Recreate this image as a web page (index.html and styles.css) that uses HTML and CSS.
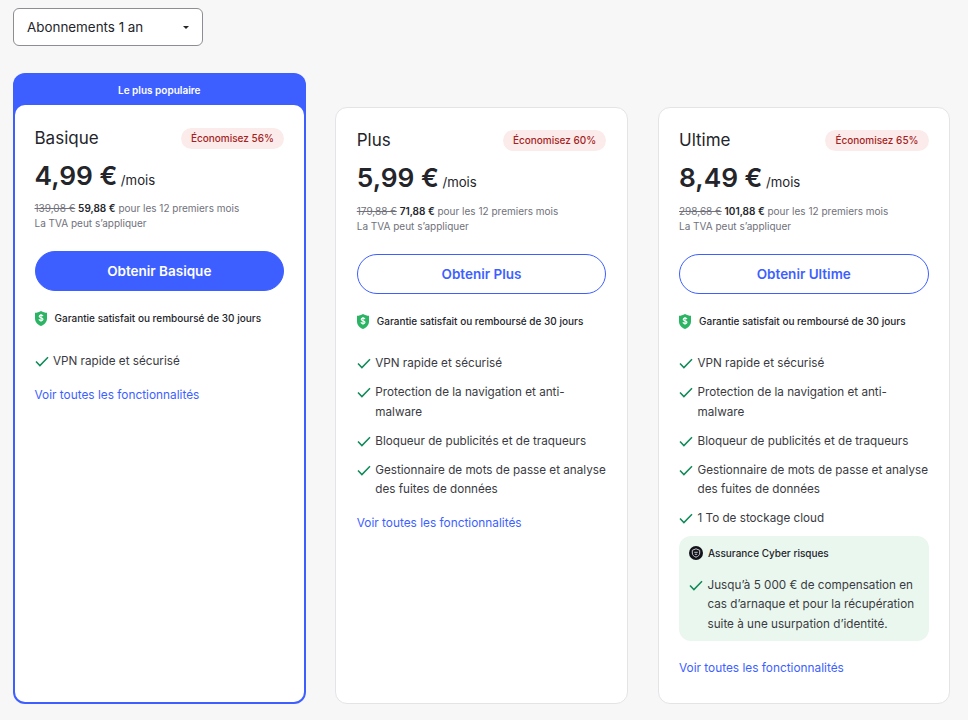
FILE: index.html
```html
<!DOCTYPE html>
<html lang="fr">
<head>
<meta charset="utf-8">
<title>Abonnements</title>
<link rel="stylesheet" href="styles.css">
</head>
<body>
<svg class="defs" width="0" height="0" aria-hidden="true">
  <symbol id="check" viewBox="0 0 14 11"><path d="M1 5.600 4.900 9.600 13 1.200" fill="none" stroke="#0f8a58" stroke-width="1.500"/></symbol>
  <symbol id="shield" viewBox="0 0 12 15"><path d="M6 0C8 1.200 10 1.700 12 1.800V7.500C12 11 9.500 13.500 6 15 2.500 13.500 0 11 0 7.500V1.800C2 1.700 4 1.200 6 0Z" fill="#2bb463"/><path d="M8 5.100C7.700 4.400 7 4.100 6 4.100 4.900 4.100 4.200 4.600 4.200 5.400 4.200 7.200 8 6.200 8 8.200 8 9 7.200 9.500 6 9.500 5 9.500 4.200 9.100 3.900 8.300M6 3V10.700" fill="none" stroke="#fff" stroke-width="1.100"/></symbol>
</svg>
<main class="page">
  <div class="select"><span>Abonnements 1 an</span><i class="caret"></i></div>
  <div class="plans">
    <section class="featured">
      <div class="ribbon">Le plus populaire</div>
      <article class="card card-inner">
        <header class="head"><h2>Basique</h2><span class="badge">Économisez 56%</span></header>
        <p class="price"><strong>4,99 €</strong> <span>/mois</span></p>
        <p class="meta"><s>139,08 €</s> <b>59,88 €</b> pour les 12 premiers mois<br>La TVA peut s’appliquer</p>
        <a class="cta cta-solid">Obtenir Basique</a>
        <p class="guarantee"><svg class="shield"><use href="#shield"/></svg>Garantie satisfait ou remboursé de 30 jours</p>
        <ul class="features">
          <li><svg class="check"><use href="#check"/></svg>VPN rapide et sécurisé</li>
        </ul>
        <a class="more">Voir toutes les fonctionnalités</a>
      </article>
    </section>
    <article class="card">
      <header class="head"><h2>Plus</h2><span class="badge">Économisez 60%</span></header>
      <p class="price"><strong>5,99 €</strong> <span>/mois</span></p>
      <p class="meta"><s>179,88 €</s> <b>71,88 €</b> pour les 12 premiers mois<br>La TVA peut s’appliquer</p>
      <a class="cta">Obtenir Plus</a>
      <p class="guarantee"><svg class="shield"><use href="#shield"/></svg>Garantie satisfait ou remboursé de 30 jours</p>
      <ul class="features">
        <li><svg class="check"><use href="#check"/></svg>VPN rapide et sécurisé</li>
        <li><svg class="check"><use href="#check"/></svg>Protection de la navigation et anti-malware</li>
        <li><svg class="check"><use href="#check"/></svg>Bloqueur de publicités et de traqueurs</li>
        <li><svg class="check"><use href="#check"/></svg>Gestionnaire de mots de passe et analyse des fuites de données</li>
      </ul>
      <a class="more">Voir toutes les fonctionnalités</a>
    </article>
    <article class="card">
      <header class="head"><h2>Ultime</h2><span class="badge">Économisez 65%</span></header>
      <p class="price"><strong>8,49 €</strong> <span>/mois</span></p>
      <p class="meta"><s>298,68 €</s> <b>101,88 €</b> pour les 12 premiers mois<br>La TVA peut s’appliquer</p>
      <a class="cta">Obtenir Ultime</a>
      <p class="guarantee"><svg class="shield"><use href="#shield"/></svg>Garantie satisfait ou remboursé de 30 jours</p>
      <ul class="features">
        <li><svg class="check"><use href="#check"/></svg>VPN rapide et sécurisé</li>
        <li><svg class="check"><use href="#check"/></svg>Protection de la navigation et anti-malware</li>
        <li><svg class="check"><use href="#check"/></svg>Bloqueur de publicités et de traqueurs</li>
        <li><svg class="check"><use href="#check"/></svg>Gestionnaire de mots de passe et analyse des fuites de données</li>
        <li><svg class="check"><use href="#check"/></svg>1 To de stockage cloud</li>
      </ul>
      <div class="insurance">
        <p class="insurance-title"><svg class="cyber" viewBox="0 0 14 14"><circle cx="7" cy="7" r="7" fill="#12131a"/><path d="M7 2.800 10.700 4.300V7C10.700 9.100 9.100 10.500 7 11.200 4.900 10.500 3.300 9.100 3.300 7V4.300Z" fill="none" stroke="#c9c9ce" stroke-width="1"/><path d="M5.300 6.300H8.700M5.800 8.300H8.200" stroke="#c9c9ce" stroke-width="1"/></svg>Assurance Cyber risques</p>
        <p class="insurance-item"><svg class="check"><use href="#check"/></svg>Jusqu’à 5 000 € de compensation en cas d’arnaque et pour la récupération suite à une usurpation d’identité.</p>
      </div>
      <a class="more">Voir toutes les fonctionnalités</a>
    </article>
  </div>
</main>
</body>
</html>
```
FILE: styles.css
```css
* { box-sizing: border-box; }
html, body { margin: 0; height: 720px; overflow: hidden; }
body { background: #f7f7f8; font-family: Inter, "Liberation Sans", sans-serif; color: #24252b; }
.defs { position: absolute; }
p, h2, ul { margin: 0; padding: 0; }
.page { padding: 8px 17px 0 13px; }
.select { width: 190px; height: 38px; display: flex; align-items: center; justify-content: space-between; padding: 0 13px 0 13px; background: #fff; border: 1px solid #8d8e93; border-radius: 6px; font-size: 13.400px; }
.caret { width: 0; height: 0; border: 3.500px solid transparent; border-top-color: #24252b; border-bottom-width: 0; }
.plans { display: grid; grid-template-columns: 292.500px 292.500px 292.500px; column-gap: 29.750px; margin-top: 27px; align-items: stretch; }
.featured { height: 631px; background: #3e5fff; border-radius: 12px; padding: 0 2px 2px; display: flex; flex-direction: column; }
.ribbon { height: 32px; flex: none; padding-top: 2px; color: #fff; font-size: 10px; font-weight: 600; display: flex; align-items: center; justify-content: center; }
.card { background: #fff; border: 1px solid #e4e4e7; border-radius: 12px; padding: 21px 20.500px 0; margin-top: 34px; height: 597px; display: flex; flex-direction: column; }
.card-inner { margin-top: 0; border: 0; padding: 22px 19.500px 0; height: auto; flex: 1; border-radius: 10px; }
.head { display: flex; justify-content: space-between; align-items: center; height: 22px; }
h2 { font-size: 17px; font-weight: 400; }
.badge { background: #fbeceb; color: #a51f1f; border-radius: 11px; font-size: 10px; font-weight: 500; height: 21px; padding: 0 10px; display: flex; align-items: center; }
.price { margin-top: 11px; height: 34px; display: flex; align-items: baseline; gap: 3.500px; }
.card-inner .price { height: 33px; }
.price strong { font-size: 26.300px; font-weight: 600; }
.price span { font-size: 13.200px; }
.meta { margin-top: 8px; font-size: 10px; line-height: 15px; color: #70717a; }
.meta s { color: #70717a; }
.meta b { font-weight: 600; color: #24252b; }
.cta { margin-top: 20px; height: 40px; border: 1px solid #3e5fff; border-radius: 20px; color: #3e5fff; background: #fff; font-size: 13.500px; font-weight: 600; display: flex; align-items: center; justify-content: center; }
.cta-solid { background: #3e5fff; color: #fff; }
.guarantee { margin-top: 19px; height: 16px; font-size: 10px; font-weight: 500; display: flex; align-items: center; gap: 8px; }
.shield { width: 12px; height: 15px; flex: none; }
.features { list-style: none; margin-top: 25px; font-size: 11.700px; line-height: 19.500px; color: #3a3b42; display: flex; flex-direction: column; gap: 9.500px; }
.card-inner .features { margin-top: 26px; }
.features li, .insurance-item { position: relative; padding-left: 18.500px; display: block; }
.check { position: absolute; left: 0; top: 4px; width: 14px; height: 11px; }
.more { margin-top: 14px; font-size: 11.850px; line-height: 19px; color: #3e5fff; font-weight: 400; }
.insurance { margin: 7px 0 4px; background: #eaf7ee; border-radius: 12px; padding: 10px 10px 7px; }
.insurance-title { display: flex; align-items: center; gap: 5px; font-size: 10px; font-weight: 500; height: 15px; color: #24252b; }
.cyber { width: 14px; height: 14px; flex: none; }
.insurance-item { margin-top: 15px; font-size: 11.700px; line-height: 19.500px; color: #3a3b42; }
```
